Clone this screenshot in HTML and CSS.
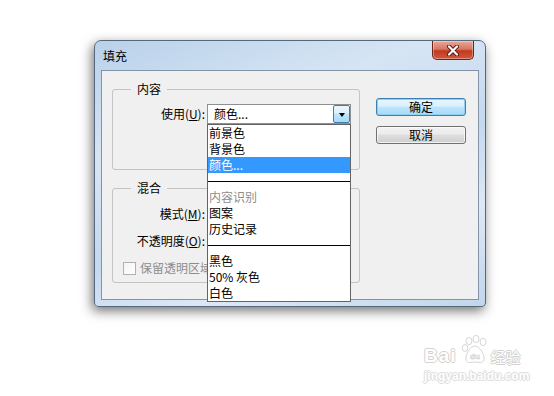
FILE: index.html
```html
<!DOCTYPE html>
<html lang="zh-CN">
<head>
    <meta charset="UTF-8">
    <title>填充</title>
    <link rel="stylesheet" href="styles.css">
</head>
<body>

    <div class="page">
        <div class="window">
            <div class="titlebar">
                <span class="title">填充</span>
                <button class="close-btn">
                    <svg width="14" height="11" viewBox="0 0 14 11">
                        <path d="M3 1.5 L11 9.5 M11 1.5 L3 9.5" stroke="#5a1a10" stroke-width="4" stroke-linecap="round"/>
                        <path d="M3 1.5 L11 9.5 M11 1.5 L3 9.5" stroke="#ffffff" stroke-width="2.2" stroke-linecap="round"/>
                    </svg>
                </button>
            </div>

            <div class="client">
                <div class="left-col">
                    <!-- 内容 -->
                    <fieldset class="group group-content">
                        <legend>内容</legend>
                        <div class="row">
                            <label>使用(<u>U</u>):</label>
                            <div class="select">
                                <span class="select-value">颜色...</span>
                                <span class="select-arrow"></span>

                                <ul class="dropdown">
                                    <li>前景色</li>
                                    <li>背景色</li>
                                    <li class="selected">颜色...</li>
                                    <li class="sep"></li>
                                    <li class="disabled">内容识别</li>
                                    <li>图案</li>
                                    <li>历史记录</li>
                                    <li class="sep"></li>
                                    <li>黑色</li>
                                    <li>50% 灰色</li>
                                    <li>白色</li>
                                </ul>
                            </div>
                        </div>
                    </fieldset>

                    <!-- 混合 -->
                    <fieldset class="group group-blend">
                        <legend>混合</legend>
                        <div class="row">
                            <label>模式(<u>M</u>):</label>
                            <div class="select"></div>
                        </div>
                        <div class="row">
                            <label>不透明度(<u>O</u>):</label>
                            <div class="select"></div>
                        </div>
                        <div class="check-row">
                            <span class="checkbox"></span>
                            <span class="check-label">保留透明区域</span>
                        </div>
                    </fieldset>
                </div>

                <div class="buttons">
                    <button class="btn btn-default">确定</button>
                    <button class="btn">取消</button>
                </div>
            </div>
        </div>

        <!-- watermark -->
        <div class="watermark">
            <div class="wm-top">
                <span class="wm-bai">Bai</span>
                <span class="wm-paw">
                    <svg width="30" height="30" viewBox="0 0 30 30">
                        <g fill="#ffffff" stroke="#d6d6d6" stroke-width="1">
                            <ellipse cx="9" cy="6" rx="3" ry="3.6"/>
                            <ellipse cx="16" cy="4" rx="3" ry="3.6"/>
                            <ellipse cx="23" cy="7" rx="3" ry="3.6"/>
                            <ellipse cx="5" cy="13" rx="2.8" ry="3.4"/>
                            <path d="M15 11 C 10 11, 5 20, 6 25 C 7 29, 12 27, 15 27 C 18 27, 23 29, 24 25 C 25 20, 20 11, 15 11 Z"/>
                        </g>
                        <text x="15" y="24" text-anchor="middle" font-family="Liberation Sans, sans-serif" font-size="8" font-weight="bold" fill="#ffffff" stroke="#d0d0d0" stroke-width="0.6">du</text>
                    </svg>
                </span>
                <span class="wm-jy">经验</span>
            </div>
            <div class="wm-url">jingyan.baidu.com</div>
        </div>
    </div>

</body>
</html>
```

FILE: styles.css
```css
body {
    margin: 0;
    background: #ffffff;
    font-family: "Noto Sans CJK SC", "Liberation Sans", sans-serif;
    font-size: 12px;
    color: #000000;
}

.page {
    position: relative;
    width: 554px;
    height: 396px;
    padding: 40px 0 0 94px;
    box-sizing: border-box;
    overflow: hidden;
}

/* Window frame */
.window {
    width: 392px;
    height: 267px;
    box-sizing: border-box;
    display: flex;
    flex-direction: column;
    border: 1px solid #56687c;
    border-radius: 7px 7px 4px 4px;
    background: linear-gradient(160deg, #b9d1ea 0%, #d6e5f4 30%, #c4d9ef 55%, #dce8f6 75%, #c2d6ec 100%);
    box-shadow: -2px 4px 12px rgba(0, 0, 0, 0.55);
}

.titlebar {
    height: 29px;
    display: flex;
    align-items: center;
    padding-left: 8px;
}

.title {
    line-height: 16px;
    margin-top: 1px;
}

.close-btn {
    margin-left: auto;
    margin-right: 11px;
    align-self: flex-start;
    width: 42px;
    height: 19px;
    padding: 0;
    border: 1px solid #6b2519;
    border-top: none;
    border-radius: 0 0 5px 5px;
    background: linear-gradient(#e8a999 0%, #d77563 45%, #c1391f 55%, #d2573c 100%);
    box-shadow: inset 0 0 0 1px rgba(255, 255, 255, 0.35);
    display: flex;
    align-items: center;
    justify-content: center;
}

/* Client area */
.client {
    flex: 1;
    margin: 0 6px 6px;
    box-sizing: border-box;
    display: flex;
    padding: 10px 0 0 10px;
    background: #f0f0f0;
    border: 1px solid #8494a6;
}

.left-col {
    width: 248px;
}

.group {
    margin: 0;
    min-width: 0;
    border: 1px solid #c4c4c4;
    border-radius: 3px;
    padding-left: 9px;
    padding-right: 0;
    position: relative;
}

.group legend {
    margin-left: 9px;
    padding: 0 6px;
    line-height: 16px;
    color: #000000;
}

.group-content {
    padding-top: 7px;
    padding-bottom: 45px;
}

.group-blend {
    margin-top: 10px;
    padding-top: 8px;
    padding-bottom: 4px;
}

.row {
    display: grid;
    grid-template-columns: 83px 144px;
    column-gap: 2px;
    align-items: center;
    height: 20px;
}

.row + .row {
    margin-top: 7px;
}

.row label {
    text-align: right;
    line-height: 16px;
}

/* Combo box */
.select {
    position: relative;
    height: 20px;
    box-sizing: border-box;
    border: 1px solid #8e8f8f;
    background: #ffffff;
    display: flex;
    align-items: center;
}

.select-value {
    padding-left: 6px;
    line-height: 16px;
}

.select-arrow {
    margin-left: auto;
    width: 17px;
    height: 18px;
    box-sizing: border-box;
    border: 1px solid #3c7fb1;
    border-radius: 2px;
    background: linear-gradient(#eaf6fd 0%, #d9f0fc 45%, #bee6fd 50%, #a7d9f5 100%);
    display: flex;
    align-items: center;
    justify-content: center;
}

.select-arrow::after {
    content: "";
    border-left: 3.5px solid transparent;
    border-right: 3.5px solid transparent;
    border-top: 4px solid #000000;
    margin-top: 1px;
}

.dropdown {
    position: absolute;
    top: 100%;
    left: -1px;
    width: 144px;
    margin: 1px 0 0;
    padding: 0;
    list-style: none;
    box-sizing: border-box;
    background: #ffffff;
    border: 1px solid #646464;
    z-index: 5;
}

.dropdown li {
    height: 16px;
    line-height: 16px;
    padding-left: 1px;
    white-space: nowrap;
}

.dropdown li.selected {
    background: #3399ff;
    color: #ffffff;
}

.dropdown li.disabled {
    color: #8d8d8d;
}

.dropdown li.sep {
    display: flex;
    align-items: center;
    padding: 0;
}

.dropdown li.sep::after {
    content: "";
    flex: 1;
    height: 1px;
    background: #000000;
}

.check-row {
    display: flex;
    align-items: center;
    height: 20px;
    margin-top: 7px;
}

.checkbox {
    width: 13px;
    height: 13px;
    box-sizing: border-box;
    margin-left: 1px;
    border: 1px solid #b1b1b1;
    background: linear-gradient(135deg, #f4f4f4, #ffffff);
}

.check-label {
    margin-left: 4px;
    color: #8d8d8d;
    line-height: 16px;
}

/* Buttons */
.buttons {
    margin-left: 16px;
    padding-top: 17px;
    display: flex;
    flex-direction: column;
    gap: 10px;
}

.btn {
    width: 90px;
    height: 18px;
    padding: 0;
    font-family: inherit;
    font-size: 12px;
    line-height: 16px;
    color: #000000;
    border: 1px solid #707070;
    border-radius: 3px;
    background: linear-gradient(#f2f2f2 0%, #ebebeb 45%, #dddddd 50%, #cfcfcf 100%);
    box-shadow: inset 0 0 0 1px rgba(255, 255, 255, 0.7);
}

.btn-default {
    border-color: #3c7fb1;
    background: linear-gradient(#eaf6fd 0%, #d9f0fc 45%, #bee6fd 50%, #a7d9f5 100%);
    box-shadow: inset 0 0 0 1px #8fd0f2;
}

/* Baidu watermark */
.watermark {
    position: absolute;
    left: 424px;
    top: 333px;
    color: #ffffff;
}

.wm-top {
    display: flex;
    align-items: flex-end;
    height: 32px;
}

.wm-bai {
    font-family: "Liberation Sans", sans-serif;
    font-size: 19px;
    font-weight: bold;
    line-height: 18px;
    letter-spacing: 1px;
    text-shadow: 1px 0 0 #d2d2d2, -1px 0 0 #d2d2d2, 0 1px 0 #d2d2d2, 0 -1px 0 #d2d2d2;
}

.wm-paw {
    display: block;
    margin-left: 3px;
    height: 30px;
}

.wm-jy {
    font-size: 15px;
    line-height: 16px;
    margin-left: 1px;
    text-shadow: 1px 0 0 #d2d2d2, -1px 0 0 #d2d2d2, 0 1px 0 #d2d2d2, 0 -1px 0 #d2d2d2;
}

.wm-url {
    margin-top: 4px;
    font-family: "Liberation Sans", sans-serif;
    font-size: 12px;
    font-weight: bold;
    line-height: 14px;
    text-shadow: 1px 0 0 #dcdcdc, -1px 0 0 #dcdcdc, 0 1px 0 #dcdcdc, 0 -1px 0 #dcdcdc;
}
```
